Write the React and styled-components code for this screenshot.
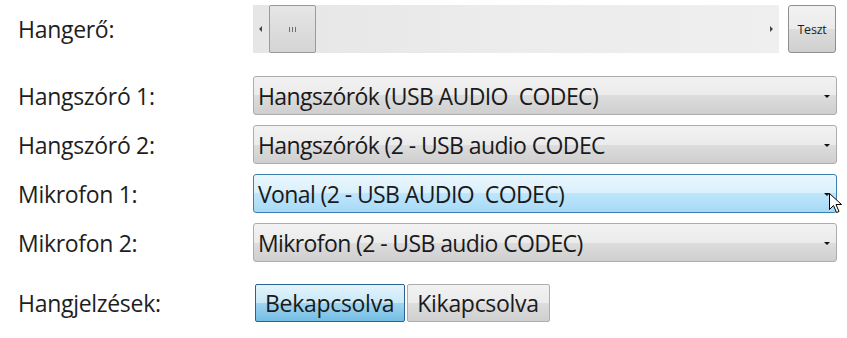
import React from "react";
import styled, { createGlobalStyle, css } from "styled-components";

const Global = createGlobalStyle`
  html, body { margin: 0; padding: 0; background: #ffffff; }
  body { font-family: "Open Sans", "Noto Sans", sans-serif; }
`;

const Page = styled.div`
  width: 847px;
  height: 338px;
  padding-top: 5px;
  box-sizing: border-box;
  display: flex;
  flex-direction: column;
`;

const Row = styled.div`
  display: grid;
  grid-template-columns: 253px 584px;
  align-items: center;
  height: ${(p) => p.$h}px;
  margin-top: ${(p) => p.$mt || 0}px;
`;

const Label = styled.div`
  padding-left: 18px;
  font-size: 23px;
  color: #1e1e1e;
  letter-spacing: -0.3px;
  white-space: nowrap;
`;

const SliderRow = styled.div`
  display: flex;
  gap: 9px;
  height: 48px;
`;

const Track = styled.div`
  position: relative;
  width: 526px;
  display: flex;
  align-items: center;
  background: linear-gradient(90deg, #e6e6e6 0%, #ececec 50%, #efefef 100%);
`;

const TrackArrow = styled.span`
  width: 0;
  height: 0;
  border-top: 3px solid transparent;
  border-bottom: 3px solid transparent;
  ${(p) =>
    p.$dir === "left"
      ? css`border-right: 3px solid #444; margin-left: 6px;`
      : css`border-left: 3px solid #444; margin-left: auto; margin-right: 6px;`}
`;

const Thumb = styled.div`
  width: 45px;
  height: 46px;
  margin-left: 7px;
  border: 1px solid #9a9a9a;
  border-radius: 2px;
  background: linear-gradient(#e6e6e6, #d4d4d4);
  display: flex;
  align-items: center;
  justify-content: center;
  gap: 2px;
`;

const Grip = styled.span`
  width: 1px;
  height: 5px;
  background: #6f6f6f;
`;

const SmallButton = styled.button`
  width: 48px;
  height: 48px;
  padding: 0;
  border: 1px solid #8f8f8f;
  border-radius: 3px;
  background: linear-gradient(#f2f2f2 0%, #ebebeb 50%, #dddddd 50%, #cfcfcf 100%);
  font-family: "Open Sans", sans-serif;
  font-size: 12.5px;
  letter-spacing: -0.2px;
  color: #1e1e1e;
`;

const Combo = styled.div`
  position: relative;
  height: 39px;
  box-sizing: border-box;
  border: 1px solid ${(p) => (p.$hot ? "#3c7fb1" : "#acacac")};
  border-radius: 3px;
  background: ${(p) =>
    p.$hot
      ? "linear-gradient(#eaf6fd 0%, #d9f0fc 50%, #bee6fd 50%, #a7d9f5 100%)"
      : "linear-gradient(#f2f2f2 0%, #ebebeb 50%, #dddddd 50%, #cfcfcf 100%)"};
  display: flex;
  align-items: center;
  padding-left: 4px;
  font-size: 23px;
  letter-spacing: -0.6px;
  color: #1a1a1a;
  white-space: pre;
`;

const Arrow = styled.span`
  position: absolute;
  right: 6px;
  top: 18px;
  width: 0;
  height: 0;
  border-left: 3px solid transparent;
  border-right: 3px solid transparent;
  border-top: 3px solid #111;
`;

const Cursor = styled.svg`
  position: absolute;
  left: 575px;
  top: 18px;
`;

const Toggles = styled.div`
  display: flex;
  gap: 2px;
  padding-left: 2px;
`;

const Toggle = styled.button`
  height: 38px;
  padding: 0 10px 0 9px;
  box-sizing: border-box;
  border: 1px solid ${(p) => (p.$on ? "#2c628b" : "#adadad")};
  border-radius: 2px;
  background: ${(p) =>
    p.$on
      ? "linear-gradient(#e5f4fc 0%, #c9e8f8 50%, #a0d5f1 50%, #74bde3 100%)"
      : "linear-gradient(#f2f2f2 0%, #ebebeb 50%, #dddddd 50%, #cfcfcf 100%)"};
  font-family: "Open Sans", sans-serif;
  font-size: 23px;
  letter-spacing: -0.3px;
  color: #1a1a1a;
  line-height: 1;
`;

const combos = [
  { label: "Hangszóró 1:", value: "Hangszórók (USB AUDIO  CODEC)" },
  { label: "Hangszóró 2:", value: "Hangszórók (2 - USB audio CODEC" },
  { label: "Mikrofon 1:", value: "Vonal (2 - USB AUDIO  CODEC)", hot: true },
  { label: "Mikrofon 2:", value: "Mikrofon (2 - USB audio CODEC)" },
];

export default function App() {
  return (
    <>
      <Global />
      <Page>
        <Row $h={48}>
          <Label>Hangerő:</Label>
          <SliderRow>
            <Track>
              <TrackArrow $dir="left" />
              <Thumb>
                <Grip />
                <Grip />
                <Grip />
              </Thumb>
              <TrackArrow $dir="right" />
            </Track>
            <SmallButton>Teszt</SmallButton>
          </SliderRow>
        </Row>
        {combos.map((c, i) => (
          <Row key={c.label} $h={39} $mt={i === 0 ? 23 : 10}>
            <Label>{c.label}</Label>
            <Combo $hot={c.hot}>
              {c.value}
              <Arrow />
              {c.hot && (
                <Cursor width="13" height="21" viewBox="0 0 13 21">
                  <path
                    d="M0.5 0.5 L0.5 16.5 L4.5 12.5 L7.5 19.5 L10 18.5 L7 11.5 L12.5 11.5 Z"
                    fill="#ffffff"
                    stroke="#000000"
                    strokeWidth="1"
                    strokeLinejoin="miter"
                  />
                </Cursor>
              )}
            </Combo>
          </Row>
        ))}
        <Row $h={38} $mt={22}>
          <Label>Hangjelzések:</Label>
          <Toggles>
            <Toggle $on>Bekapcsolva</Toggle>
            <Toggle>Kikapcsolva</Toggle>
          </Toggles>
        </Row>
      </Page>
    </>
  );
}
